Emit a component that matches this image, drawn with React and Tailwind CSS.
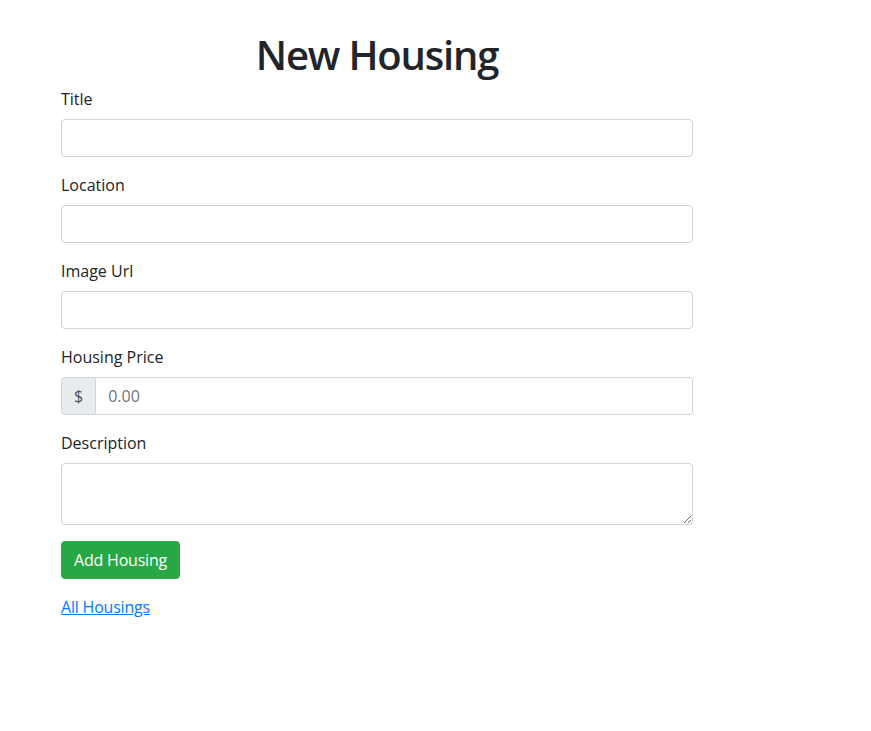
import React from "react";

function Field({ label, children }) {
  return (
    <div className="mb-4">
      <label className="block mb-2 text-[16px] leading-6 text-[#212529]">{label}</label>
      {children}
    </div>
  );
}

const inputCls =
  "block w-full h-[38px] px-3 py-1.5 text-[16px] leading-6 text-[#495057] bg-white border border-[#ced4da] rounded outline-none";

export default function App() {
  return (
    <div className="min-h-[731px] bg-white pt-[31px] pl-[61px] [font-family:'Open_Sans','Noto_Sans',sans-serif]">
      <div className="w-[632px]">
        <h1 className="text-[40px] leading-[48px] font-semibold tracking-[-1.2px] text-center mb-2 text-[#212529]">
          New Housing
        </h1>
        <form onSubmit={(e) => e.preventDefault()}>
          <Field label="Title">
            <input type="text" className={inputCls} />
          </Field>
          <Field label="Location">
            <input type="text" className={inputCls} />
          </Field>
          <Field label="Image Url">
            <input type="text" className={inputCls} />
          </Field>
          <Field label="Housing Price">
            <div className="flex w-full h-[38px]">
              <span className="flex items-center px-3 text-[16px] leading-6 text-[#495057] bg-[#e9ecef] border border-[#ced4da] rounded-l">
                $
              </span>
              <input
                type="text"
                placeholder="0.00"
                className="flex-1 min-w-0 h-[38px] px-3 text-[16px] leading-6 text-[#495057] placeholder:text-[#6c757d] bg-white border border-l-0 border-[#ced4da] rounded-r outline-none"
              />
            </div>
          </Field>
          <Field label="Description">
            <textarea
              rows={2}
              className="block w-full h-[62px] px-3 py-1.5 text-[16px] leading-6 text-[#495057] bg-white border border-[#ced4da] rounded outline-none resize-y"
            />
          </Field>
          <button
            type="submit"
            className="h-[38px] px-3 text-[16px] leading-6 tracking-[-0.2px] text-white bg-[#28a745] border border-[#28a745] rounded"
          >
            Add Housing
          </button>
        </form>
        <div className="mt-4 leading-6 text-[16px]">
          <a href="#" className="text-[#007bff] underline tracking-[-0.2px]">
            All Housings
          </a>
        </div>
      </div>
    </div>
  );
}
